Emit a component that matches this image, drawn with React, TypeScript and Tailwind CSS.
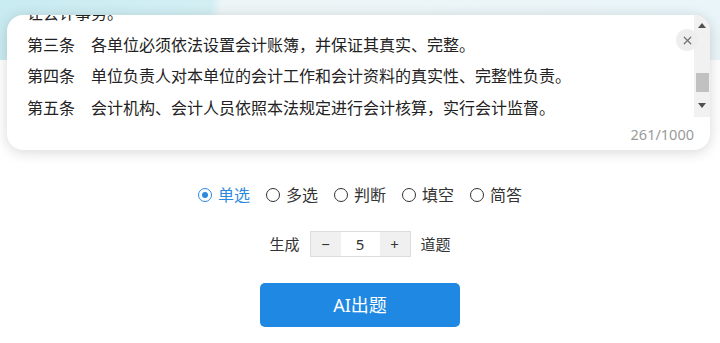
import { X } from "lucide-react";

const lines = [
  "让会计事务。",
  "第三条　各单位必须依法设置会计账簿，并保证其真实、完整。",
  "第四条　单位负责人对本单位的会计工作和会计资料的真实性、完整性负责。",
  "第五条　会计机构、会计人员依照本法规定进行会计核算，实行会计监督。",
];

const types = ["单选", "多选", "判断", "填空", "简答"];

function Radio({ label, checked }: { label: string; checked?: boolean }) {
  return (
    <label className="flex items-center gap-[6px] cursor-pointer">
      <span
        className={
          checked
            ? "flex h-[14px] w-[14px] items-center justify-center rounded-full border-[1.6px] border-[#2b8ae0]"
            : "flex h-[14px] w-[14px] items-center justify-center rounded-full border-[1.6px] border-[#333]"
        }
      >
        {checked && <span className="h-[6px] w-[6px] rounded-full bg-[#2b8ae0]" />}
      </span>
      <span className={checked ? "text-[#2b8ae0]" : "text-[#333]"}>{label}</span>
    </label>
  );
}

export default function App() {
  return (
    <div
      className="relative h-[343px] w-[720px] overflow-hidden bg-white bg-[linear-gradient(100deg,#c8ebf1_0%,#d3eff4_29%,#eef5f7_30.5%,#e9f5f9_100%)] bg-[length:100%_60px] bg-no-repeat pt-[15px]"
      style={{ fontFamily: '"Noto Sans", "Noto Sans CJK SC", sans-serif' }}
    >
      {/* Text card */}
      <div className="relative ml-[7px] mr-[10px] h-[135px] overflow-hidden rounded-[16px] bg-white shadow-[0_2px_14px_rgba(0,0,0,0.16)]">
        <div className="flex h-[102px]">
          <div className="flex-1 overflow-hidden pl-[20px]">
            <div className="-mt-[17px] text-[16px] leading-[31.5px] text-[#222]">
              {lines.map((l) => (
                <div key={l} className="whitespace-nowrap">
                  {l}
                </div>
              ))}
            </div>
          </div>
          {/* scrollbar */}
          <div className="flex w-[16px] flex-col items-center bg-[#f1f1f1]">
            <div className="flex h-[16px] w-full items-end justify-center pb-[3px]">
              <svg width="8" height="5" viewBox="0 0 8 5">
                <path d="M0 5 L4 0 L8 5 Z" fill="#505050" />
              </svg>
            </div>
            <div className="mt-[42px] h-[19px] w-[13px] bg-[#c1c1c1]" />
            <div className="flex-1" />
            <div className="flex h-[16px] w-full items-start justify-center pt-[2px]">
              <svg width="8" height="5" viewBox="0 0 8 5">
                <path d="M0 0 L8 0 L4 5 Z" fill="#505050" />
              </svg>
            </div>
          </div>
        </div>
        <div className="pr-[16px] pt-[7px] text-right text-[14.5px] leading-[20px] text-[#9a9a9a]">
          261/1000
        </div>
        <button className="absolute left-[669px] top-[14px] flex h-[22px] w-[22px] items-center justify-center rounded-full bg-[#eeeeee] text-[#6f6f6f]">
          <X size={13} strokeWidth={2.2} />
        </button>
      </div>

      {/* Question type */}
      <div className="mt-[33px] flex justify-center gap-[16px] text-[16px] leading-[24px]">
        {types.map((t, i) => (
          <Radio key={t} label={t} checked={i === 0} />
        ))}
      </div>

      {/* Count */}
      <div className="mt-[24px] flex items-center justify-center text-[15px] text-[#333]">
        <span>生成</span>
        <div className="mx-[10px] flex h-[26px] border border-[#dcdcdc]">
          <button className="flex w-[30px] items-center justify-center bg-[#f0f0f0] text-[#333]">
            −
          </button>
          <div className="flex w-[39px] items-center justify-center bg-white">5</div>
          <button className="flex w-[30px] items-center justify-center bg-[#f0f0f0] text-[#333]">
            +
          </button>
        </div>
        <span>道题</span>
      </div>

      <div className="mt-[26px] flex justify-center">
        <button className="h-[44px] w-[200px] rounded-[5px] bg-[#1f88e3] text-[18px] text-white">
          AI出题
        </button>
      </div>
    </div>
  );
}
